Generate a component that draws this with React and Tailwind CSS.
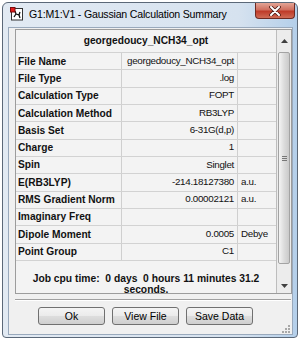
import React from "react";

const rows = [
  { label: "File Name", value: "georgedoucy_NCH34_opt", unit: "" },
  { label: "File Type", value: ".log", unit: "" },
  { label: "Calculation Type", value: "FOPT", unit: "" },
  { label: "Calculation Method", value: "RB3LYP", unit: "" },
  { label: "Basis Set", value: "6-31G(d,p)", unit: "" },
  { label: "Charge", value: "1", unit: "" },
  { label: "Spin", value: "Singlet", unit: "" },
  { label: "E(RB3LYP)", value: "-214.18127380", unit: "a.u." },
  { label: "RMS Gradient Norm", value: "0.00002121", unit: "a.u." },
  { label: "Imaginary Freq", value: "", unit: "" },
  { label: "Dipole Moment", value: "0.0005", unit: "Debye" },
  { label: "Point Group", value: "C1", unit: "" },
];

const font = { fontFamily: '"Liberation Sans", Arial, sans-serif' };

const AppIcon = () => (
  <svg width="14" height="14" viewBox="0 0 14 14">
    <rect x="1.5" y="1.5" width="11" height="11.5" fill="#fff" stroke="#333" />
    <path d="M4 10 L6 7 L9 8 L10 5 M6 7 L5 4 M9 8 L10 11" stroke="#111" strokeWidth="1.3" fill="none" />
    <rect x="0.5" y="0.5" width="4.5" height="4.5" fill="#e21b1b" stroke="#7a0c0c" />
  </svg>
);

const CloseIcon = () => (
  <svg width="12" height="10" viewBox="0 0 12 10">
    <path d="M2 1 L10 9 M10 1 L2 9" stroke="#4a1a14" strokeWidth="3.6" strokeLinecap="round" />
    <path d="M2 1 L10 9 M10 1 L2 9" stroke="#fff" strokeWidth="2" strokeLinecap="round" />
  </svg>
);

const Button = ({ children }) => (
  <button className="w-[67px] h-[18px] rounded-[3px] border border-[#707070] bg-[linear-gradient(to_bottom,#f4f4f4,#ebebeb_48%,#dddddd_52%,#cfcfcf)] text-[10.5px] leading-none text-black">
    {children}
  </button>
);

const App = () => {
  return (
    <div className="w-[300px] h-[340px] bg-white p-[2px]" style={font}>
      <div className="w-[296px] h-[336px] flex flex-col rounded-t-[6px] rounded-b-[4px] border border-[#5b6878] bg-[linear-gradient(to_right,#e2eaf3,#d6e2ef_80%,#b4cfea)] pl-[5px] pr-[4px] pb-[4px]">
        <div className="h-[24px] flex items-start shrink-0">
          <div className="mt-[4px] ml-[2px]">
            <AppIcon />
          </div>
          <div className="ml-[5px] mt-[6px] text-[10.6px] leading-none tracking-[-0.2px] text-black">
            G1:M1:V1 - Gaussian Calculation Summary
          </div>
          <div className="ml-auto mr-[-2px] w-[40px] h-[16px] rounded-b-[4px] border border-t-0 border-[#6e2a22] bg-[linear-gradient(to_bottom,#e3a596,#d06f5f_45%,#bf3a28_55%,#cf6b55)] flex items-center justify-center">
            <CloseIcon />
          </div>
        </div>

        <div className="flex-1 flex flex-col bg-[#f0f0f0] border border-[#99a9bc]">
          <div className="ml-[6px] mt-[1px] w-[277px] h-[265px] border border-[#9c9c9c] bg-[#f3f3f3] flex overflow-hidden">
            <div className="w-[260px] flex flex-col">
              <div className="h-[23px] shrink-0 border-b border-[#d2d2d2] flex items-center justify-center text-[10.2px] font-bold text-[#111]">
                georgedoucy_NCH34_opt
              </div>
              {rows.map((r) => (
                <div key={r.label} className="h-[17.33px] shrink-0 flex border-b border-[#d2d2d2]">
                  <div className="w-[106px] border-r border-[#cfcfcf] pl-[2px] flex items-center text-[10.2px] font-bold text-[#111] whitespace-nowrap">
                    {r.label}
                  </div>
                  <div className="w-[116px] border-r border-[#cfcfcf] pr-[3px] flex items-center justify-end text-[9.8px] tracking-[-0.3px] text-[#111] whitespace-nowrap">
                    {r.value}
                  </div>
                  <div className="flex-1 pl-[3px] flex items-center text-[9.8px] tracking-[-0.3px] text-[#111]">
                    {r.unit}
                  </div>
                </div>
              ))}
              <div className="pt-[12px] px-[2px] text-center whitespace-pre-wrap text-[10.3px] leading-[11px] font-bold text-[#111]">
                {"Job cpu time:  0 days  0 hours 11 minutes 31.2 seconds."}
              </div>
            </div>
            <div className="w-[15px] border-l border-[#bdbdbd] bg-[#ececec] flex flex-col items-center">
              <div className="h-[22px] w-full flex items-center justify-center">
                <svg width="7" height="4" viewBox="0 0 7 4">
                  <path d="M0 4 L3.5 0 L7 4 Z" fill="#404040" />
                </svg>
              </div>
              <div className="h-[212px] w-[12px] rounded-[2px] border border-[#a3a3a3] bg-[linear-gradient(to_right,#f4f4f4,#dcdcdc_50%,#cacaca)] flex items-center justify-center">
                <div className="flex flex-col gap-[1px]">
                  <div className="w-[5px] h-[1px] bg-[#777]" />
                  <div className="w-[5px] h-[1px] bg-[#777]" />
                  <div className="w-[5px] h-[1px] bg-[#777]" />
                </div>
              </div>
              <div className="flex-1 w-full flex items-end justify-center pb-[5px]">
                <svg width="7" height="4" viewBox="0 0 7 4">
                  <path d="M0 0 L3.5 4 L7 0 Z" fill="#404040" />
                </svg>
              </div>
            </div>
          </div>

          <div className="ml-[6px] mt-[5px] w-[276px] border-t border-[#a0a0a0] border-b border-b-white" />

          <div className="flex items-start pl-[29px] mt-[6px] gap-[7px]">
            <Button>Ok</Button>
            <Button>View File</Button>
            <Button>Save Data</Button>
          </div>
          <div className="flex-1 flex items-end justify-end pr-[2px] pb-[1px]">
            <svg width="8" height="8" viewBox="0 0 8 8">
              <g fill="#a8a8a8">
                <rect x="6" y="0" width="2" height="2" />
                <rect x="3" y="3" width="2" height="2" />
                <rect x="6" y="3" width="2" height="2" />
                <rect x="0" y="6" width="2" height="2" />
                <rect x="3" y="6" width="2" height="2" />
                <rect x="6" y="6" width="2" height="2" />
              </g>
            </svg>
          </div>
        </div>
      </div>
    </div>
  );
};

export default App;
